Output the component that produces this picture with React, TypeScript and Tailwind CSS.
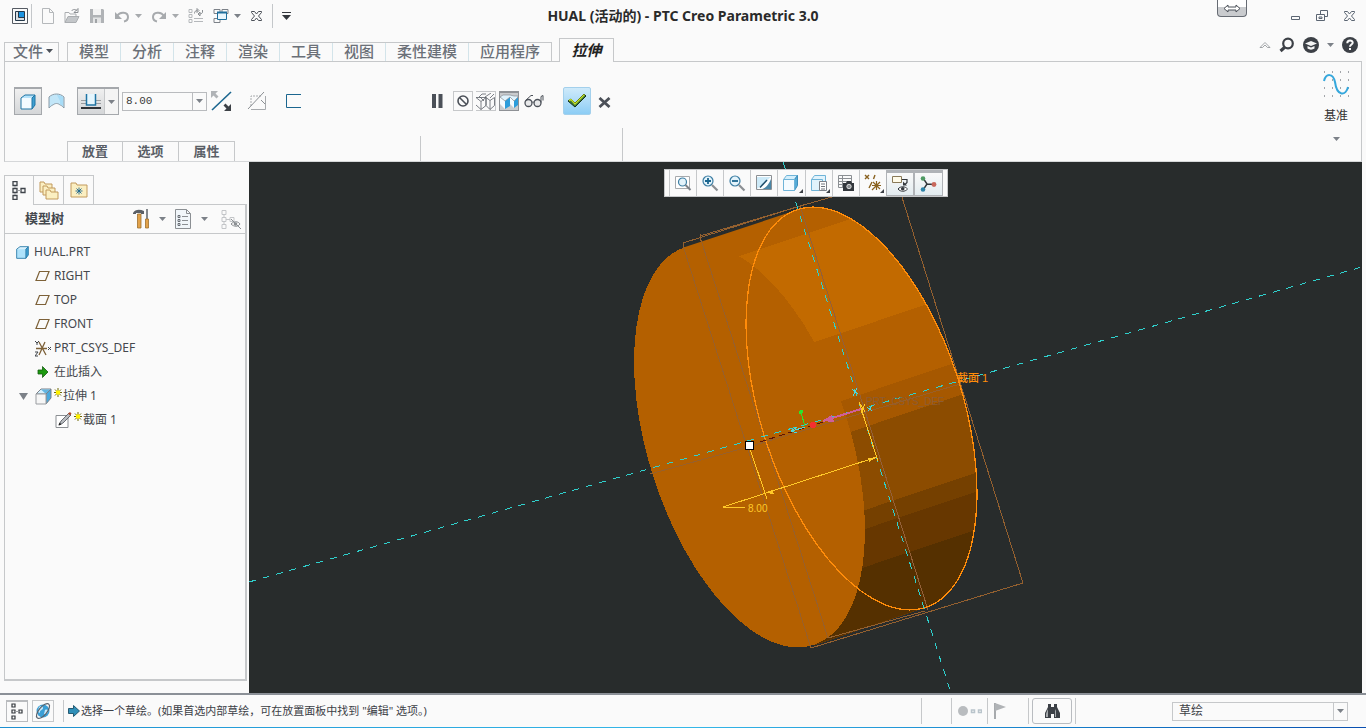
import { useState } from 'react'
import type { ReactNode } from 'react'

const ribbonTabs = ['模型', '分析', '注释', '渲染', '工具', '视图', '柔性建模', '应用程序']
const dashboardTabs = ['放置', '选项', '属性']

interface IconProps {
  w?: number
  h?: number
  children: ReactNode
}

function Icon({ w = 16, h = 16, children }: IconProps) {
  return (
    <svg width={w} height={h} viewBox={`0 0 ${w} ${h}`} fill="none" className="block shrink-0" aria-hidden="true">
      {children}
    </svg>
  )
}

function Caret({ color = '#7c8188' }: { color?: string }) {
  return (
    <Icon w={7} h={4}>
      <path d="M0 0h7L3.5 4z" fill={color} />
    </Icon>
  )
}

interface ToolButtonProps {
  label: string
  className?: string
  children: ReactNode
}

function ToolButton({ label, className = '', children }: ToolButtonProps) {
  return (
    <button type="button" aria-label={label} title={label} className={`flex shrink-0 items-center justify-center ${className}`}>
      {children}
    </button>
  )
}

function CrossIcon({ color = '#4b5058' }: { color?: string }) {
  return (
    <Icon w={13} h={12}>
      <path
        d="M1.5 1.5h3l2 2.5 2-2.5h3v1L8.500 6l3 3.500v1h-3l-2-2.500-2 2.500h-3v-1l3-3.500-3-3.500z"
        stroke={color}
        strokeWidth="1"
      />
    </Icon>
  )
}

function Cube({ w = 18, face = '#b5e3fb', front = '#f4fbff' }: { w?: number; face?: string; front?: string }) {
  return (
    <svg width={w} height={w} viewBox="0 0 18 18" fill="none" className="block shrink-0" aria-hidden="true">
      <path d="M2 5l4-3h10l-3 3z" fill={face} />
      <path d="M13 5l3-3v10l-3 4z" fill="#3f9fd0" />
      <path d="M2 5h11v11H2z" fill={front} />
      <path d="M2 5l4-3h10v10l-3 4H2zM13 5l3-3M13 5v11" stroke="#1f74a4" strokeWidth="1" />
    </svg>
  )
}

function QuickAccess() {
  return (
    <div className="flex items-center gap-[9px] pl-3">
      <div className="flex items-center gap-[3px]">
        <ToolButton label="窗口">
          <Icon>
            <path d="M.5.5h15v15H.5z" stroke="#555b63" />
            <path d="M3.500 3.500h9v9h-9z" fill="#d9dde1" stroke="#24384a" />
            <path d="M7 4h5v5H7z" fill="#1b93e0" />
            <path d="M6.500 4v5.500H12" stroke="#24384a" />
          </Icon>
        </ToolButton>
        <span className="h-6 w-px bg-[#c4c7ca]" />
      </div>
      <ToolButton label="新建">
        <Icon w={14}>
          <path d="M1.500.5h7l4 4v11h-11zM8.500.5v4h4" stroke="#b5b8bb" />
        </Icon>
      </ToolButton>
      <ToolButton label="打开">
        <Icon>
          <path d="M1 14.500V4.500h4l1 1.500h6v3" stroke="#aaadb0" />
          <path d="M1 14.500l3-6h11l-3 6z" fill="#c3c6c9" stroke="#aaadb0" />
          <path d="M7.500 3c1.500-2 4-2 5.500 0M14 .5v4h-4z" stroke="#8b8f93" />
        </Icon>
      </ToolButton>
      <ToolButton label="保存">
        <Icon>
          <path d="M1 1h13l1 1v13H1z" fill="#b0b3b6" />
          <path d="M4 1h8v6H4z" fill="#f3f3f3" />
          <path d="M4 9.500h8V15H4z" fill="#e3e4e5" />
          <path d="M6 11h2v4H6z" fill="#a0a3a6" />
        </Icon>
      </ToolButton>
      <div className="flex items-center gap-[5px]">
        <ToolButton label="撤消">
          <Icon>
            <path d="M3 8c3-5 11-4 11 1 0 2-1.500 4-4 4.500" stroke="#a7aaad" strokeWidth="2" />
            <path d="M1 4v7h7z" fill="#a7aaad" />
          </Icon>
        </ToolButton>
        <Caret color="#a7aaad" />
      </div>
      <div className="flex items-center gap-[5px]">
        <ToolButton label="重做">
          <Icon>
            <path d="M13 8C10 3 2 4 2 9c0 2 1.500 4 4 4.500" stroke="#a7aaad" strokeWidth="2" />
            <path d="M15 4v7H8z" fill="#a7aaad" />
          </Icon>
        </ToolButton>
        <Caret color="#a7aaad" />
      </div>
      <ToolButton label="重新生成">
        <Icon>
          <path d="M1 1.500h3v3H1zM1 6.500h3v3H1zM1 11.500h3v3H1z" stroke="#b5b8bb" />
          <path d="M6 10.500h9M6 13.500h9" stroke="#b5b8bb" />
          <path d="M6.500 5.500c0-2 1-3 3-3M9 .5l2 2-2 2zM14.500 2v2c0 1-1 2-3 2M12 4v4l-2-2z" stroke="#8b8f93" />
        </Icon>
      </ToolButton>
      <div className="flex items-center gap-[5px]">
        <ToolButton label="窗口切换">
          <Icon>
            <path d="M1 1.500h6v4H1zM9 1.500h6v4H9zM1 10.500h6v4H1z" stroke="#7c8188" />
            <path d="M4.500 4.500h9v7h-9z" fill="#e9f6fd" stroke="#1f6f9c" />
            <path d="M4 4.500h10" stroke="#1f6f9c" strokeWidth="2" />
          </Icon>
        </ToolButton>
        <Caret />
      </div>
      <ToolButton label="关闭窗口">
        <CrossIcon />
      </ToolButton>
      <span className="h-6 w-px bg-[#c4c7ca]" />
      <ToolButton label="自定义快速访问工具栏">
        <Icon w={9} h={8}>
          <path d="M0 .5h9" stroke="#33373c" />
          <path d="M0 3h9L4.500 8z" fill="#33373c" />
        </Icon>
      </ToolButton>
    </div>
  )
}

function TitleBar() {
  return (
    <header className="grid h-[38px] grid-cols-[1fr_auto_1fr] pb-[6px]">
      <QuickAccess />
      <h1 className="self-center font-['Noto_Sans','Noto_Sans_CJK_SC',sans-serif] text-[14px] leading-4 font-bold text-[#2a2a2a]">
        HUAL (活动的) - PTC Creo Parametric 3.0
      </h1>
      <div className="flex items-center justify-end pr-[10px]">
        <ToolButton label="切换" className="mr-[44px] h-[17px] w-[30px] self-start rounded-b border border-t-0 border-[#666b73] bg-linear-to-b from-white from-45% to-[#c9cbce] to-45%">
          <Icon w={18} h={9}>
            <path d="M1 4.500l4-3.500v2h8v-2l4 3.500-4 3.500v-2H5v2z" fill="#fff" stroke="#4b5058" />
          </Icon>
        </ToolButton>
        <ToolButton label="最小化" className="mr-4">
          <Icon w={9} h={8}>
            <path d="M.5 4.500h8v3h-8z" stroke="#5b6572" />
          </Icon>
        </ToolButton>
        <ToolButton label="还原" className="mr-[15px]">
          <Icon w={12} h={12}>
            <path d="M4.500 4V.5h7v6H8.500M.5 4.500h8v6h-8zM3 7h3v1.500H3z" stroke="#5b6572" />
          </Icon>
        </ToolButton>
        <ToolButton label="关闭">
          <CrossIcon color="#5b6572" />
        </ToolButton>
      </div>
    </header>
  )
}

function TabBar() {
  return (
    <nav className="mx-1 flex h-6 items-end text-[15px] leading-none font-medium text-[#6b7078] shadow-[inset_0_-1px_0_#c6c8ca]">
      <button type="button" className="flex h-5 w-[55px] items-center gap-[3px] border border-[#c6c8ca] pb-[2px] pl-2">
        文件
        <Caret color="#4b5058" />
      </button>
      <div className="ml-2 flex h-5 border border-[#c6c8ca]">
        {ribbonTabs.map((tab) => (
          <button
            key={tab}
            type="button"
            className="flex items-center border-r border-[#d3e4ea] px-[11px] pb-[2px] last:border-r-0"
          >
            {tab}
          </button>
        ))}
      </div>
      <button
        type="button"
        aria-current="page"
        className="ml-[7px] h-6 w-[55px] border border-b-0 border-[#c6c8ca] bg-[#fafafa] font-bold text-[#222] italic"
      >
        拉伸
      </button>
      <div className="mr-1 mb-[9px] ml-auto flex items-center gap-2">
        <ToolButton label="折叠功能区">
          <Icon w={12} h={8}>
            <path d="M1 6.500l5-5 5 5H8.500L6 4 3.500 6.500z" stroke="#8b8f93" strokeWidth=".8" />
          </Icon>
        </ToolButton>
        <ToolButton label="搜索">
          <Icon>
            <circle cx="9" cy="6.500" r="4.800" stroke="#3c4046" strokeWidth="2.200" />
            <path d="M5.500 10.500L1.500 14" stroke="#3c4046" strokeWidth="3" />
          </Icon>
        </ToolButton>
        <ToolButton label="学习中心">
          <Icon>
            <circle cx="8" cy="8" r="8" fill="#3c4046" />
            <path d="M2 6.500L8 4l6 2.500L8 9zM4.500 9v2.500c2 1.500 5 1.500 7 0V9L8 10.500z" fill="#f5f5f5" />
          </Icon>
        </ToolButton>
        <Caret />
        <ToolButton label="帮助">
          <Icon>
            <circle cx="8" cy="8" r="8" fill="#3c4046" />
            <path d="M5.300 6.200c0-3.600 5.600-3.400 5.400-.4C10.600 7.600 8 7.600 8 9.800M8 11v2" stroke="#fafafa" strokeWidth="2" />
          </Icon>
        </ToolButton>
      </div>
    </nav>
  )
}

function DepthControls() {
  return (
    <div className="flex h-7 items-center pl-[9px]">
      <ToolButton label="拉伸为实体" className="size-7 border border-t-2 border-[#a5a8ac] bg-linear-to-b from-[#f0f0f0] to-[#d4d6d8]">
        <Cube />
      </ToolButton>
      <ToolButton label="拉伸为曲面" className="ml-[6px]">
        <Icon w={17}>
          <path d="M1 4c4-4 11-4 15 0v11c-2-2-3-3-4-3-2-2-5-2-7 0-1 0-2 1-4 3z" fill="#c2e6f8" stroke="#8a9aa6" />
          <path d="M9 2c3 0 5 1 6 2v9l-3-2V8z" fill="#a7dcf7" />
        </Icon>
      </ToolButton>
      <div className="ml-3 flex h-7 w-[42px] border border-t-2 border-[#a5a8ac] bg-linear-to-b from-[#f0f0f0] to-[#d4d6d8]">
        <ToolButton label="盲孔" className="w-[27px] border-r border-[#c6c8ca]">
          <Icon w={20} h={18}>
            <path d="M0 7.500h20M0 10.500h20" stroke="#9a9da1" />
            <path d="M5 1h10v11H5z" fill="#e5f6fe" />
            <path d="M5.500 1v11h9V1" stroke="#1f74a4" strokeWidth="1.500" />
            <path d="M0 15h20" stroke="#2f3338" strokeWidth="2" />
          </Icon>
        </ToolButton>
        <ToolButton label="深度选项" className="flex-1 bg-[#f4f4f4]">
          <Caret />
        </ToolButton>
      </div>
      <div className="ml-[3px] flex h-[19px] w-[85px] border border-[#b9bbbe]">
        <input
          aria-label="深度值"
          defaultValue="8.00"
          className="min-w-0 flex-1 bg-transparent pl-[3px] font-['Liberation_Mono','Noto_Sans_CJK_SC',monospace] text-[11px] leading-4 text-[#3a3a3a] outline-none"
        />
        <ToolButton label="深度值列表" className="w-[14px] border-l border-[#b9bbbe]">
          <Caret />
        </ToolButton>
      </div>
      <ToolButton label="反向" className="ml-1">
        <Icon w={21} h={20}>
          <path d="M1 19L20 1" stroke="#1b668f" strokeWidth="1.600" />
          <path d="M0 0h7L4.500 2.500l3 3-2 2-3-3L0 7z" fill="#b0b3b6" />
          <path d="M20 20h-7l2.500-2.500-3-3 2-2 3 3L20 13z" fill="#3c4046" />
        </Icon>
      </ToolButton>
      <ToolButton label="移除材料" className="ml-[15px]">
        <Icon w={20} h={20}>
          <path d="M18.500 5v13.500H4" stroke="#a7aaad" />
          <path d="M4 15V5h10" stroke="#a7aaad" strokeDasharray="2 1" />
          <path d="M14 9l4 4M1 18L17 1" stroke="#8b8f93" />
        </Icon>
      </ToolButton>
      <ToolButton label="加厚草绘" className="ml-[18px]">
        <Icon w={17} h={16}>
          <path d="M16 1.500H1.500v13H16" stroke="#1b668f" />
        </Icon>
      </ToolButton>
    </div>
  )
}

function FeatureControls() {
  return (
    <div className="flex h-7 items-center pl-[10px]">
      <ToolButton label="暂停">
        <Icon w={12} h={14}>
          <path d="M1 0h4v14H1zM7.500 0h4v14h-4z" fill="#4b5058" />
        </Icon>
      </ToolButton>
      <ToolButton label="无预览" className="ml-[10px] size-5 border border-[#c6c8ca]">
        <Icon w={14} h={14}>
          <circle cx="7" cy="7" r="5" stroke="#4b5058" strokeWidth="1.600" />
          <path d="M3.500 3.500l7 7" stroke="#4b5058" strokeWidth="1.600" />
        </Icon>
      </ToolButton>
      <ToolButton label="未附着预览" className="ml-[3px] size-5 border border-l-0 border-[#c6c8ca]">
        <Icon w={19} h={17}>
          <path
            d="M0 4.500h10l4 3M0 4.500l5 4v8L0 12M5 8.500l5-4v8l-5 4M10 4.500v8l4 4 4.500-4v-8l-4.500 3v9M3 4l3-3h4M9 4l6-4M14 5l4-4M4 4l4 4"
            stroke="#5b6067"
            strokeWidth=".8"
          />
        </Icon>
      </ToolButton>
      <ToolButton label="附着预览" className="ml-[3px] size-5 border border-t-2 border-[#8e9195] bg-[#c9cbcd]">
        <Icon w={18} h={16}>
          <path d="M0 3l5 4v8L0 10zM10 3l4 4v7l-4-4z" fill="#f4fbff" />
          <path d="M5 7l5-4v9l-5 3zM14 7l4-4v8l-4 3z" fill="#2c9ddb" />
          <path d="M0 3l3-2h7l4 1h4v1l-4 4-4-4-5 4z" fill="#e1f3fc" stroke="#7c8188" strokeWidth=".6" />
        </Icon>
      </ToolButton>
      <ToolButton label="验证" className="ml-[5px]">
        <Icon w={20} h={14}>
          <circle cx="4.500" cy="9" r="3.500" fill="#e9eaeb" stroke="#4b5058" strokeWidth="1.300" />
          <circle cx="13.500" cy="9" r="3.500" fill="#e9eaeb" stroke="#4b5058" strokeWidth="1.300" />
          <path d="M8 8.500c.5-.8 1.500-.8 2 0M1.500 6.500L7 1.500h2M17 8.500V2.500l2-1v5" stroke="#4b5058" />
        </Icon>
      </ToolButton>
      <ToolButton label="确定" className="ml-[19px] size-7 rounded-[2px] border border-[#a3d0ec] bg-linear-to-b from-[#cfeafa] to-[#8ccdf5]">
        <Icon w={22} h={20}>
          <path d="M2 10l3-2 4 4L18 3l2 2L9 16z" fill="#3d7a3a" stroke="#17301a" strokeWidth="1" />
          <path d="M3 9.500L5 8.500l4 4.500 9.500-9.500" stroke="#c9e021" strokeWidth="1.400" />
        </Icon>
      </ToolButton>
      <ToolButton label="取消" className="ml-[7px] pt-[3px]">
        <Icon w={13} h={11}>
          <path d="M1.500 1l10 9M11.500 1l-10 9" stroke="#4b5058" strokeWidth="2.800" />
        </Icon>
      </ToolButton>
    </div>
  )
}

function Ribbon() {
  return (
    <section className="mx-1 flex h-[100px] border border-t-0 border-[#c6c8ca] border-b-[#d5d7d9]">
      <div className="flex w-[415px] flex-col justify-between pt-[25px]">
        <DepthControls />
        <div className="ml-[62px] flex h-[20px] text-[13px] font-bold text-[#5a5f67]">
          {dashboardTabs.map((tab) => (
            <button key={tab} type="button" className="w-14 border border-b-0 border-[#c6c8ca] leading-4 not-first:border-l-0">
              {tab}
            </button>
          ))}
        </div>
      </div>
      <span className="h-[25px] w-px self-end bg-[#c6c8ca]" />
      <div className="w-[201px] pt-[25px]">
        <FeatureControls />
      </div>
      <span className="h-[33px] w-px self-end bg-[#c6c8ca]" />
      <button type="button" className="ml-auto flex w-[50px] flex-col items-center pt-2 text-[12px] leading-4 text-[#333]">
        <Icon w={26} h={28}>
          <path
            d="M1 2h1M9 2h1M17 2h1M25 2h1M1 10h1M9 10h1M17 10h1M25 10h1M1 18h1M9 18h1M17 18h1M25 18h1M1 26h1M9 26h1M17 26h1M25 26h1"
            stroke="#4b5058"
          />
          <path d="M1 11C3 3 10 3 12 12c2 15 11 14 13 5" stroke="#35a7dc" strokeWidth="2" />
        </Icon>
        <span className="mt-[10px] mb-[13px]">基准</span>
        <Caret />
      </button>
    </section>
  )
}

function PlaneIcon() {
  return (
    <Icon w={15} h={12}>
      <path d="M4.500 1.500h9.500l-3.500 9H1z" stroke="#7d6138" strokeWidth="1.200" />
    </Icon>
  )
}

function StarMark() {
  return (
    <Icon w={8} h={9}>
      <path d="M4 0v9M0 4.500h8M1 1.500l6 6M7 1.500l-6 6" stroke="#6e6800" strokeWidth="1" />
      <path d="M2 2.500h4v4H2z" fill="#fff200" />
    </Icon>
  )
}

function ModelTreeIcon() {
  return (
    <Icon w={14} h={19}>
      <path d="M1 .5h4v4H1zM1 7.500h4v4H1zM1 14.500h4v4H1zM9 7.500h4v4H9z" stroke="#3f444b" strokeWidth="1.300" />
      <path d="M3 5v2M3 12v2M5.500 9.500H9" stroke="#9a9da1" />
    </Icon>
  )
}

interface TreeItem {
  name: string
  icon: ReactNode
  className: string
}

const treeItems: TreeItem[] = [
  { name: 'HUAL.PRT', icon: <Cube w={15} front="#aee2fb" face="#d8f1fd" />, className: 'gap-1 pl-[10px]' },
  { name: 'RIGHT', icon: <PlaneIcon />, className: 'gap-1 pl-[30px]' },
  { name: 'TOP', icon: <PlaneIcon />, className: 'gap-1 pl-[30px]' },
  { name: 'FRONT', icon: <PlaneIcon />, className: 'gap-1 pl-[30px]' },
  {
    name: 'PRT_CSYS_DEF',
    icon: (
      <Icon w={17} h={17}>
        <path d="M1 8.500h11M4 2l7 13M10 2L4 15" stroke="#7d6138" strokeWidth="1.300" />
        <path d="M0 1l2 2 2-2M2 3v2M0 12h3l-3 4h3M13 7l3 3M16 7l-3 3" stroke="#3f444b" />
      </Icon>
    ),
    className: 'gap-[2px] pl-[30px]',
  },
  {
    name: '在此插入',
    icon: (
      <Icon w={12} h={12}>
        <path d="M1 4h4.500V.5L11 6l-5.500 5.500V8H1z" fill="#1c9a10" stroke="#145c10" strokeWidth=".8" />
      </Icon>
    ),
    className: 'gap-[5px] pl-8',
  },
  {
    name: '拉伸 1',
    icon: (
      <>
        <Icon w={9} h={7}>
          <path d="M0 0h9L4.500 7z" fill="#7c8188" />
        </Icon>
        <span className="ml-[6px] flex items-start gap-[2px]">
          <Icon w={17} h={17}>
            <path d="M1 6l5-5h10l-5 5z" fill="#d4effc" stroke="#7c8188" />
            <path d="M6 1.500h9.500L11 6z" fill="#62b4e0" />
            <path d="M11 6l5-5v9l-5 6z" fill="#4aa8dc" stroke="#7c8188" />
            <path d="M1 6h10v10H1z" fill="#f6f6f6" stroke="#9a9da1" />
          </Icon>
          <StarMark />
        </span>
      </>
    ),
    className: 'gap-px pl-[14px]',
  },
  {
    name: '截面 1',
    icon: (
      <span className="flex items-start gap-[2px]">
        <Icon w={17} h={16}>
          <path d="M1 3.500h12v12H1z" fill="#fff" stroke="#8b8f93" />
          <path d="M4 13l2-4 8-8 2 2-8 8z" fill="#b9bcc0" stroke="#4b5058" strokeWidth=".8" />
          <path d="M13 1.500l2-1.500 1.500 1.500L15 3.500z" fill="#b0492e" />
          <path d="M3.500 13.500l1-3 2 2z" fill="#222" />
        </Icon>
        <StarMark />
      </span>
    ),
    className: 'gap-px pl-[50px]',
  },
]

function ModelTree() {
  return (
    <aside className="flex w-[249px] shrink-0 flex-col pt-[13px] pr-[2px] pb-3 pl-1">
      <div className="flex h-[30px] shadow-[inset_0_-1px_0_#c6c8ca]">
        <ToolButton label="模型树" className="w-[30px] border border-b-0 border-[#c6c8ca] bg-[#fafafa]">
          <ModelTreeIcon />
        </ToolButton>
        <ToolButton label="文件夹浏览器" className="w-[30px] border border-l-0 border-[#c6c8ca]">
          <Icon w={20} h={20}>
            <g fill="#fbefc2" stroke="#c29a5c" strokeWidth="1">
              <path d="M1 2h4l1 2h7v8H1z" />
              <path d="M4 6h4l1 2h7v7H4z" />
              <path d="M7 10h4l1 2h7v7H7z" />
            </g>
          </Icon>
        </ToolButton>
        <ToolButton label="收藏夹" className="w-[30px] border border-l-0 border-[#c6c8ca]">
          <Icon w={18} h={16}>
            <path d="M1 1h5l1 2h10v12H1z" fill="#fbefc2" stroke="#c29a5c" />
            <path d="M9 5.500v7M5.500 9h7M6.500 6.500l5 5M11.500 6.500l-5 5" stroke="#1b668f" strokeWidth=".9" />
          </Icon>
        </ToolButton>
      </div>
      <div className="flex flex-1 flex-col border-x border-r-2 border-b-2 border-[#c6c8ca]">
        <div className="flex h-[29px] shrink-0 items-center border-b border-[#c6c8ca] pr-1 pl-5">
          <h2 className="text-[13px] font-bold text-[#44484e]">模型树</h2>
          <div className="ml-auto flex items-center gap-[9px]">
            <ToolButton label="设置">
              <Icon w={17} h={20}>
                <path d="M0 4c2-4 7-4 11-2v3H8V4H3v1H0z" fill="#5b6067" />
                <path d="M4.500 5h3.500v14H4.500z" fill="#e2a24a" stroke="#a0702c" strokeWidth=".8" />
                <path d="M14 0v10" stroke="#5b6067" strokeWidth="1.500" />
                <path d="M12.500 10h3v9h-3z" fill="#e2a24a" stroke="#a0702c" strokeWidth=".8" />
              </Icon>
            </ToolButton>
            <Caret />
            <ToolButton label="显示">
              <Icon w={17} h={20}>
                <path d="M.5.500h11l4 4v15H.5z" fill="#f1f6fa" stroke="#8b8f93" />
                <path d="M11.500.500v4h4M7 7.500h6M7 11.500h6M7 15.500h6" stroke="#8b8f93" />
                <path d="M3 6.500h2v2H3zM3 10.500h2v2H3zM3 14.500h2v2H3z" stroke="#4b5058" strokeWidth=".8" />
              </Icon>
            </ToolButton>
            <Caret />
            <ToolButton label="隐藏" className="ml-1">
              <Icon w={20} h={19}>
                <path d="M1 .5h4v4H1zM1 7.500h4v4H1zM1 14.500h4v4H1zM9 7.500h4v4H9z" stroke="#c3c5c8" />
                <path d="M3 5v2M3 12v2M5 9.500h4" stroke="#c3c5c8" />
                <path d="M10 14c3-3 7-3 9 0-2 3-6 3-9 0zM10 9l10 10" stroke="#8b8f93" />
                <circle cx="14.500" cy="14" r="1.800" fill="#8b8f93" />
              </Icon>
            </ToolButton>
          </div>
        </div>
        <ul className="pt-[6px] font-['Noto_Sans','Noto_Sans_CJK_SC',sans-serif] text-[12px] text-[#45484d]">
          {treeItems.map((item) => (
            <li key={item.name} className={`flex h-6 items-center ${item.className}`}>
              {item.icon}
              <span>{item.name}</span>
            </li>
          ))}
        </ul>
      </div>
    </aside>
  )
}

const viewTools: { label: string; active?: boolean; flyout?: boolean; icon: ReactNode }[] = [
  {
    label: '重新调整',
    icon: (
      <>
        <path d="M1.500 2.500h14v12h-14z" fill="#fff" stroke="#a7aaad" />
        <circle cx="8.500" cy="8" r="4" fill="#e3f3fb" stroke="#3d7ea3" strokeWidth="1.200" />
        <path d="M11.500 11l5 5" stroke="#7c8188" strokeWidth="2" />
      </>
    ),
  },
  {
    label: '放大',
    icon: (
      <>
        <circle cx="7" cy="7" r="5" fill="#e3f3fb" stroke="#3d7ea3" strokeWidth="1.200" />
        <path d="M4 7h6M7 4v6" stroke="#1b668f" strokeWidth="1.800" />
        <path d="M11 11l5.500 5.500" stroke="#8b8f93" strokeWidth="2.200" />
      </>
    ),
  },
  {
    label: '缩小',
    icon: (
      <>
        <circle cx="7" cy="7" r="5" fill="#e3f3fb" stroke="#3d7ea3" strokeWidth="1.200" />
        <path d="M4 7h6" stroke="#1b668f" strokeWidth="1.800" />
        <path d="M11 11l5.500 5.500" stroke="#8b8f93" strokeWidth="2.200" />
      </>
    ),
  },
  {
    label: '重画',
    icon: (
      <>
        <path d="M1.500 1.500h15v14h-15z" fill="#fff" stroke="#8b8f93" />
        <path d="M2 3h14L2 15z" fill="#cdeaf8" />
        <path d="M16 5v10H7c4-1 7-5 9-10z" fill="#4a86a6" />
        <path d="M5 13.500L12 6" stroke="#1b4c6a" strokeWidth="1.500" />
      </>
    ),
  },
  {
    label: '显示样式',
    flyout: true,
    icon: (
      <>
        <path d="M1.500 5.500l3-4h11l-3 4z" fill="#d4effc" stroke="#6fb4d8" />
        <path d="M12.500 5.500l3-4v10l-3 5z" fill="#56acd8" stroke="#3f8fbb" />
        <path d="M1.500 5.500h11v11h-11z" fill="#f4fbff" stroke="#6fb4d8" />
      </>
    ),
  },
  {
    label: '已命名视图',
    flyout: true,
    icon: (
      <>
        <path d="M1.500 5.500l3-4h11v8M1.500 5.500h11v11h-11z" fill="#e1f3fc" stroke="#6fb4d8" />
        <path d="M9.500 7.500h7v9h-7z" fill="#fff" stroke="#7c8188" />
        <path d="M11 10h4M11 12.500h4M11 15h4" stroke="#4b5058" strokeWidth=".8" />
      </>
    ),
  },
  {
    label: '视图管理器',
    icon: (
      <>
        <path d="M1.500 1.500h13v12h-13zM1.500 4.500h13M1.500 7.500h13M1.500 10.500h13M5.500 1.500v12" stroke="#8b8f93" />
        <path d="M6 9h3l1-2h4l1 2h2v8H6z" fill="#33373c" />
        <circle cx="12" cy="12.500" r="2.200" fill="#8b8f93" stroke="#f3f3f3" strokeWidth=".8" />
      </>
    ),
  },
  {
    label: '基准显示过滤器',
    flyout: true,
    icon: (
      <>
        <path d="M1 1l4 4M5 1L1 5M11 1L9.500 5M8 8l-3 6" stroke="#8a6220" strokeWidth="1.400" />
        <path d="M12.500 7v9M9 8l7 7M16 8l-8 8M8 11.500h9" stroke="#8a6220" strokeWidth="1.200" />
      </>
    ),
  },
  {
    label: '注释显示',
    active: true,
    icon: (
      <>
        <path d="M1.500 1.500h9v6h-9z" fill="#fffbe9" stroke="#8a7a58" />
        <path d="M11 4.500h5v3l-2 2" stroke="#33373c" strokeWidth="1.200" />
        <path d="M12 6.500v4h4z" fill="#33373c" />
        <path d="M7 14c2.500-3 7-3 9.500 0-2.500 3-7 3-9.500 0z" fill="#fff" stroke="#33373c" />
        <circle cx="11.700" cy="13.800" r="1.800" fill="#33373c" />
      </>
    ),
  },
  {
    label: '旋转中心',
    active: true,
    icon: (
      <>
        <path d="M4 3l4 6 7 .5M8 9l-4 6" stroke="#33373c" strokeWidth="1.400" />
        <circle cx="4" cy="3.500" r="2.300" fill="#4f9a63" />
        <circle cx="15" cy="9.500" r="2.400" fill="#c8685c" />
        <circle cx="4" cy="14.500" r="2.300" fill="#2d83a8" />
      </>
    ),
  },
]

function ViewToolbar() {
  return (
    <div className="absolute top-[7px] left-1/2 flex h-7 w-[284px] -translate-x-1/2 border border-[#c6c8ca] bg-[#fafafa] px-1">
      {viewTools.map((tool) => (
        <button
          key={tool.label}
          type="button"
          aria-label={tool.label}
          className={`relative flex flex-1 items-center justify-center ${
            tool.active
              ? 'border border-t-3 border-[#b0b3b7] bg-linear-to-b from-[#fafafa] to-[#e3ecf0]'
              : 'border-l border-[#c6c8ca]'
          }`}
        >
          <Icon w={18} h={18}>{tool.icon}</Icon>
          {tool.flyout && (
            <span className="absolute right-[2px] bottom-[3px]">
              <Icon w={4} h={4}>
                <path d="M4 0v4H0z" fill="#3c4046" />
              </Icon>
            </span>
          )}
        </button>
      ))}
    </div>
  )
}

// Shading bands run along the extrusion direction; y is the top edge of the band at x = 863.
const bands = [
  { y: 215, fill: '#c26a00' },
  { y: 326, fill: '#b46000' },
  { y: 394, fill: '#a65800' },
  { y: 428, fill: '#8c4c00' },
  { y: 511, fill: '#754000' },
  { y: 530, fill: '#673700' },
  { y: 568, fill: '#553000' },
]

function Model() {
  return (
    <svg
      viewBox="249 162 1113 531"
      preserveAspectRatio="xMidYMid slice"
      fill="none"
      className="block h-full w-full"
      shapeRendering="crispEdges"
      role="img"
      aria-label="HUAL.PRT"
    >
      <defs>
        <clipPath id="side">
          <path d="M685 247L797 210L926 607L814 645z" />
          <ellipse cx="861.500" cy="408.500" rx="101" ry="209" transform="rotate(-17.800 861.500 408.500)" />
        </clipPath>
      </defs>
      <g clipPath="url(#side)">
        <rect x="600" y="180" width="420" height="500" fill="#b46000" />
        {bands.map((band) => (
          <path key={band.y} d={`M600 ${band.y + 88}L1020 ${band.y - 53}V700H600z`} fill={band.fill} />
        ))}
      </g>
      <ellipse cx="749.500" cy="446" rx="101" ry="209" transform="rotate(-17.800 749.500 446)" fill="#b46000" />

      <g stroke="#94602f" strokeWidth="1">
        <path d="M683 243L800 206L832 197M700 236L800 206M683 243L684 249M700 234v7M811 648L925 613L1023 583L895 175M828 638L925 611" />
        <path d="M684 249L811 648M701 240L828 638M650 474L748 447L960 384" stroke="#98602a" />
        <path d="M800 206L928 610" stroke="#946038" />
      </g>

      <ellipse
        cx="861.500"
        cy="408.500"
        rx="101"
        ry="209"
        transform="rotate(-17.800 861.500 408.500)"
        stroke="#ff8c0a"
        strokeWidth="1.300"
      />

      <g stroke="#2fd0cc" strokeDasharray="7 7">
        <path d="M249 582L1362 267" />
        <path d="M783 162L950 690" />
      </g>

      <path d="M760 442L823 422" stroke="#5c1408" strokeDasharray="6 4" />
      <path d="M823 421L861 409" stroke="#cf5f9a" strokeWidth="2" />
      <path d="M822 421l10-6 2 7z" fill="#cf5f9a" />
      <path d="M805 427L792 431M797 427l-6 4 6 2M852 389l6 5M857 388l-4 8M867 407l5 4M872 406l-4 5" stroke="#4fd8d8" />
      <path d="M801 413L805 426" stroke="#2be52b" />
      <circle cx="801" cy="412" r="2" fill="#2be52b" />
      <circle cx="813" cy="425" r="3" fill="#f53030" />

      <g stroke="#ffc928">
        <path d="M750 449L767 499M859 402L878 461M859 402l6 10M865 404l-4 9" />
        <path d="M877 457L723 507H745" />
      </g>
      <path d="M877 457l-9 1 1 4zM765 493l9 1-2-4z" fill="#ffc928" />
      <rect x="745.500" y="441.500" width="8" height="8" fill="#fff" stroke="#000" />

      <g className="font-['Liberation_Sans','Noto_Sans_CJK_SC',sans-serif]">
        <text x="748" y="512" fontSize="10" fill="#ffc928">8.00</text>
        <text x="957" y="382" fontSize="11" fontWeight="500" fill="#ff8c0a">截面 1</text>
        <text x="866" y="405" fontSize="10" fill="#8c5c34">PRT_CSYS_DEF</text>
      </g>
    </svg>
  )
}

function StatusBar() {
  const [filter, setFilter] = useState('草绘')

  return (
    <footer className="flex h-[34px] items-center border-t-2 border-[#8b9097]">
      <ToolButton label="显示导航器" className="ml-[6px] size-[22px] border border-t-2 border-[#b9bbbe]">
        <Icon w={14} h={17}>
          <path d="M2 1h3v3H2zM2 7h3v3H2zM2 13h3v3H2zM9 7h3v3H9z" stroke="#33373c" strokeWidth="1.200" />
          <path d="M5 8.500h4" stroke="#9a9da1" />
        </Icon>
      </ToolButton>
      <ToolButton label="显示浏览器" className="ml-1 size-[22px] border border-[#c6c8ca]">
        <Icon w={18} h={18}>
          <circle cx="9" cy="9" r="6.500" fill="#3a9fd6" />
          <path d="M5 5c2-2 4-1 4 1s-3 2-3 4-2 0-2-1zM11 8c2-1 4 0 3 2s-3 3-4 2z" fill="#c9e8f7" />
          <ellipse cx="9" cy="9" rx="9" ry="4" transform="rotate(-50 9 9)" stroke="#58616b" strokeWidth="1.200" />
        </Icon>
      </ToolButton>
      <span className="ml-[9px] h-[22px] w-px bg-[#c6c8ca]" />
      <p className="ml-1 flex items-center gap-px font-['Noto_Sans','Noto_Sans_CJK_SC',sans-serif] text-[11px] text-[#3c4046]">
        <Icon w={12} h={12}>
          <path d="M.5 3.500h5v-3l6 5.500-6 5.500v-3h-5z" fill="#2f8fb8" stroke="#1a4f68" strokeWidth=".9" />
        </Icon>
        <span>选择一个草绘。(如果首选内部草绘，可在放置面板中找到 "编辑" 选项。)</span>
      </p>
      <div className="ml-auto flex h-[26px] items-center">
        <span className="h-full w-px bg-[#c6c8ca]" />
        <span className="ml-[29px] h-full w-px bg-[#c6c8ca]" />
        <span className="mx-[5px]">
          <Icon w={25} h={12}>
            <circle cx="6" cy="6" r="5" fill="#b9bcbf" />
            <path d="M14.500 5h3v2.500h-3zM21.500 5h3v2.500h-3z" stroke="#b9c4cb" strokeWidth="1.500" />
          </Icon>
        </span>
        <span className="h-full w-px bg-[#c6c8ca]" />
        <ToolButton label="通知" className="ml-[6px]">
          <Icon w={13} h={16}>
            <path d="M1 0v16" stroke="#a7aaad" strokeWidth="2" />
            <path d="M1 0l11 4L1 8z" fill="#b0b3b6" />
          </Icon>
        </ToolButton>
        <span className="ml-[21px] h-full w-px bg-[#c6c8ca]" />
        <ToolButton label="查找" className="mx-[3px] h-[26px] w-10 rounded-[3px] border border-[#b9bcc0]">
          <Icon w={17} h={16}>
            <path d="M4 1h3v3h3V1h3v3l3 6v5h-6v-4H7v4H1v-5l3-6z" fill="#3c4046" />
            <path d="M3 8l1-2v8H2v-3z" fill="#a7aaad" />
            <path d="M11 8l1-2v8h-1z" fill="#a7aaad" />
          </Icon>
        </ToolButton>
        <span className="h-full w-px bg-[#c6c8ca]" />
        <label className="relative mr-[18px] ml-24 flex h-[19px] w-44 border border-[#c6c8ca]">
          <select
            aria-label="选择过滤器"
            value={filter}
            onChange={(e) => setFilter(e.target.value)}
            className="w-full appearance-none bg-transparent pl-[6px] text-[12px] leading-4 text-[#3c4046] outline-none"
          >
            <option value="草绘">草绘</option>
          </select>
          <span className="pointer-events-none absolute inset-y-0 right-0 flex w-[14px] items-center justify-center border-l border-[#c6c8ca]">
            <Caret />
          </span>
        </label>
      </div>
    </footer>
  )
}

export default function App() {
  return (
    <div className="flex h-screen flex-col overflow-hidden bg-[#fafafa] font-['Liberation_Sans','Noto_Sans_CJK_SC',sans-serif]">
      <TitleBar />
      <TabBar />
      <Ribbon />
      <main className="flex min-h-0 flex-1">
        <ModelTree />
        <div className="relative mr-1 min-w-0 flex-1 bg-[#282c2c]">
          <Model />
          <ViewToolbar />
        </div>
      </main>
      <StatusBar />
      <div className="h-px bg-linear-to-r from-[#1d8fd0] via-[#35b8e8] to-[#0a4fb0]" />
    </div>
  )
}
